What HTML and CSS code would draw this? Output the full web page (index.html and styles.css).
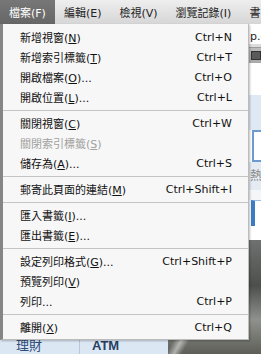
FILE: index.html
```html
<!DOCTYPE html>
<html>
<head>
<meta charset="utf-8">
<link rel="stylesheet" href="styles.css">
</head>
<body>
<div class="window">
  <div class="menubar">
    <span class="mb-item active">檔案(F)</span>
    <span class="mb-item">編輯(E)</span>
    <span class="mb-item">檢視(V)</span>
    <span class="mb-item">瀏覽記錄(I)</span>
    <span class="mb-item">書</span>
  </div>
  <div class="page">
    <div class="upper">
      <div class="hidden-col"></div>
      <div class="right-col">
        <div class="band b-white1"></div>
        <div class="band b-addr">p.c</div>
        <div class="band b-line"></div>
        <div class="band b-toolbar"><span class="tb-icon"></span></div>
        <div class="band b-white2"></div>
        <div class="band b-blue1"></div>
        <div class="band b-box"></div>
        <div class="band b-blue2">熱</div>
        <div class="band b-white3"></div>
        <div class="band b-tab"></div>
        <div class="band b-white4"></div>
      </div>
    </div>
    <div class="lower">
      <div class="lower-left">
        <div class="cells">
          <div class="cell cell-a">理財</div>
          <div class="cell cell-b">ATM</div>
        </div>
      </div>
      <div class="photo"></div>
    </div>
  </div>
  <div class="menu">
    <div class="item"><span class="label">新增視窗(<u>N</u>)</span><span class="key">Ctrl+N</span></div>
    <div class="item"><span class="label">新增索引標籤(<u>T</u>)</span><span class="key">Ctrl+T</span></div>
    <div class="item"><span class="label">開啟檔案(<u>O</u>)...</span><span class="key">Ctrl+O</span></div>
    <div class="item"><span class="label">開啟位置(<u>L</u>)...</span><span class="key">Ctrl+L</span></div>
    <div class="sep"></div>
    <div class="item"><span class="label">關閉視窗(<u>C</u>)</span><span class="key">Ctrl+W</span></div>
    <div class="item disabled"><span class="label">關閉索引標籤(<u>S</u>)</span><span class="key"></span></div>
    <div class="item"><span class="label">儲存為(<u>A</u>)...</span><span class="key">Ctrl+S</span></div>
    <div class="sep"></div>
    <div class="item"><span class="label">郵寄此頁面的連結(<u>M</u>)</span><span class="key">Ctrl+Shift+I</span></div>
    <div class="sep"></div>
    <div class="item"><span class="label">匯入書籤(<u>I</u>)...</span><span class="key"></span></div>
    <div class="item"><span class="label">匯出書籤(<u>E</u>)...</span><span class="key"></span></div>
    <div class="sep"></div>
    <div class="item"><span class="label">設定列印格式(<u>G</u>)...</span><span class="key">Ctrl+Shift+P</span></div>
    <div class="item"><span class="label">預覽列印(<u>V</u>)</span><span class="key"></span></div>
    <div class="item"><span class="label">列印...</span><span class="key">Ctrl+P</span></div>
    <div class="sep"></div>
    <div class="item"><span class="label">離開(<u>X</u>)</span><span class="key">Ctrl+Q</span></div>
  </div>
</div>
</body>
</html>
```

FILE: styles.css
```css
* { box-sizing: border-box; }
html, body {
  margin: 0;
  padding: 0;
  width: 261px;
  height: 354px;
  overflow: hidden;
}
body {
  font-family: "DejaVu Sans", "Noto Sans CJK TC", sans-serif;
  font-size: 11px;
  color: #1a1a1a;
  background: #fff;
}
.window {
  position: relative;
  width: 261px;
  height: 354px;
  display: flex;
  flex-direction: column;
}
.menubar {
  height: 24px;
  display: flex;
  align-items: stretch;
  background: linear-gradient(#eeeeee, #d6d6d6);
  white-space: nowrap;
  overflow: hidden;
  flex: none;
}
.mb-item {
  display: flex;
  align-items: center;
  padding: 0 9px;
  color: #222;
  flex: none;
}
.mb-item.active {
  background: linear-gradient(#777777, #666666);
  color: #fff;
}
.page {
  flex: 1;
  display: flex;
  flex-direction: column;
}
.upper {
  display: flex;
  height: 216px;
}
.hidden-col { width: 248px; background: #fff; }
.right-col { flex: 1; display: flex; flex-direction: column; overflow: hidden; }
.band { flex: none; }
.b-white1 { height: 6px; background: #fff; }
.b-addr { height: 14px; background: #fff; font-size: 11px; line-height: 14px; padding-left: 2px; white-space: nowrap; color: #222; }
.b-line { height: 4px; background: #dcdcdc; border-bottom: 1px solid #9a9a9a; }
.b-toolbar { height: 15px; background: linear-gradient(#bdbdbd, #a9a9a9); display: flex; align-items: center; padding-left: 3px; }
.tb-icon { width: 10px; height: 9px; background: #5a5a5a; border: 1px solid #333; }
.b-white2 { height: 32px; background: #fff; }
.b-blue1 { height: 35px; background: #dfe9f3; }
.b-box { height: 32px; background: #fff; border: 2px solid #6d9bd0; border-right: none; margin-left: 4px; }
.b-blue2 { height: 28px; background: #e4ebf2; color: #8a8a8a; font-size: 12px; line-height: 28px; padding-left: 2px; white-space: nowrap; }
.b-white3 { height: 10px; background: #f4f7fa; }
.b-tab { height: 26px; background: #fff; border-left: 4px solid #3c7cc4; border-top: 1px solid #9bbbe0; margin-left: 3px; }
.b-white4 { height: 14px; background: #fff; }
.lower {
  flex: 1;
  display: flex;
}
.lower-left {
  width: 168px;
  display: flex;
  flex-direction: column;
  justify-content: flex-end;
  background: #fff;
}
.cells {
  display: flex;
  height: 18px;
  background: #dbe7f3;
}
.cell {
  display: flex;
  align-items: flex-end;
  color: #2e4d7a;
  font-size: 13px;
  line-height: 16px;
  overflow: hidden;
}
.cell-a { width: 80px; padding-left: 16px; border-right: 1px solid #b7c8da; }
.cell-b { width: 80px; padding-left: 12px; color: #27405f; font-weight: bold; font-family: "Liberation Sans", sans-serif; }
.photo {
  flex: 1;
  background:
    linear-gradient(120deg, transparent 40%, rgba(255,255,255,0.5) 45%, transparent 50%),
    linear-gradient(#6d7270, #4d4f4b 40%, #8f918c 70%, #5d5e58);
}
.menu {
  position: absolute;
  top: 24px;
  left: 0;
  width: 249px;
  background: #f7f7f7;
  border-left: 3px solid #858585;
  border-right: 1px solid #bcbcbc;
  border-bottom: 1px solid #bcbcbc;
  box-shadow: 1px 1px 2px rgba(0,0,0,0.25);
  padding: 3px 0 2px 0;
}
.item {
  height: 20px;
  display: flex;
  align-items: center;
  justify-content: space-between;
  padding: 0 16px 0 17px;
  white-space: nowrap;
  color: #111;
}
.item u { text-decoration: underline; text-underline-offset: 1px; }
.item.disabled { color: #a0a0a0; }
.key { color: #111; }
.sep {
  height: 1px;
  background: #c4c4c4;
  margin: 3px 0 2px 0;
}
```
